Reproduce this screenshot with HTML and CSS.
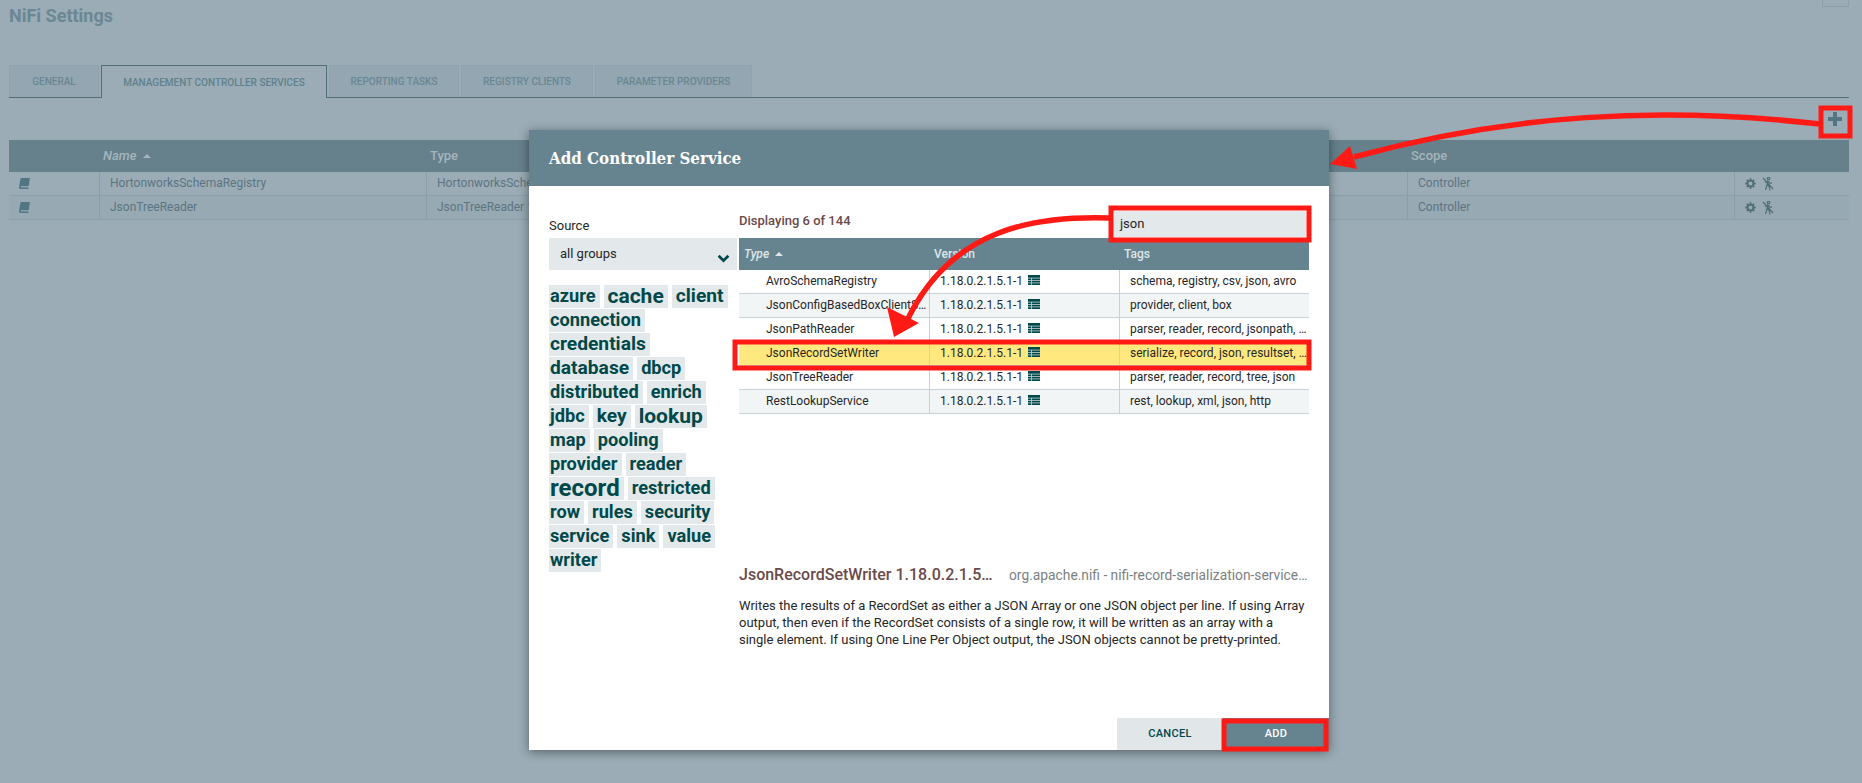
FILE: index.html
```html
<!DOCTYPE html>
<html>
<head>
    <link rel="stylesheet" href="styles.css">
</head>
<body>
    <div class="corner-box"></div>
    <h1 class="page-title">NiFi Settings</h1>

    <!-- Settings tabs -->
    <div class="tabs">
        <div class="tab tab-general">General</div>
        <div class="tab tab-active">Management Controller Services</div>
        <div class="tab tab-reporting">Reporting Tasks</div>
        <div class="tab tab-registry">Registry Clients</div>
        <div class="tab tab-parameter">Parameter Providers</div>
    </div>

    <div class="toolbar">
        <svg class="plus-icon" viewBox="0 0 14 14"><path d="M5 0h4v5h5v4H9v5H5V9H0V5h5z"/></svg>
    </div>

    <!-- Controller services table behind the dialog -->
    <div class="services">
        <div class="services-head">
            <div class="cell-icon"></div>
            <div class="cell-name"><em>Name</em> <span class="sort-up"></span></div>
            <div class="cell-type">Type</div>
            <div class="cell-scope">Scope</div>
        </div>
        <div class="services-row">
            <div class="cell-icon">
                <svg class="book-icon" viewBox="0 0 12 12"><path d="M3 0h9l-1.5 9H2.2C1.5 9 1.4 10.4 2.2 10.4h8.2l-.2 1.6H1.6C.4 12 0 11 .1 10L1.4 1.4C1.5.5 2.2 0 3 0z"/></svg>
            </div>
            <div class="cell-name">HortonworksSchemaRegistry</div>
            <div class="cell-type">HortonworksSchemaRegistry 1.18.0.2.1.5.1-1</div>
            <div class="cell-scope">Controller</div>
            <div class="cell-actions">
                <svg class="gear-icon" viewBox="0 0 12 12"><circle cx="6" cy="6" r="3.2"/><path d="M6 .3v2M6 9.7v2M.3 6h2M9.7 6h2M2 2l1.4 1.4M8.6 8.6L10 10M10 2L8.6 3.4M3.4 8.6L2 10"/></svg>
                <svg class="run-icon" viewBox="0 0 12 14"><circle cx="6.5" cy="1.6" r="1.3"/><path d="M6 3.5L5 8l-1.5 5M5.5 8l2 2 .3 3.5M5.8 4L3 5.5M6 4l2 2.2h2M1 1l10 11"/></svg>
            </div>
        </div>
        <div class="services-row row-dark">
            <div class="cell-icon">
                <svg class="book-icon" viewBox="0 0 12 12"><path d="M3 0h9l-1.5 9H2.2C1.5 9 1.4 10.4 2.2 10.4h8.2l-.2 1.6H1.6C.4 12 0 11 .1 10L1.4 1.4C1.5.5 2.2 0 3 0z"/></svg>
            </div>
            <div class="cell-name">JsonTreeReader</div>
            <div class="cell-type">JsonTreeReader 1.18.0.2.1.5.1-1</div>
            <div class="cell-scope">Controller</div>
            <div class="cell-actions">
                <svg class="gear-icon" viewBox="0 0 12 12"><circle cx="6" cy="6" r="3.2"/><path d="M6 .3v2M6 9.7v2M.3 6h2M9.7 6h2M2 2l1.4 1.4M8.6 8.6L10 10M10 2L8.6 3.4M3.4 8.6L2 10"/></svg>
                <svg class="run-icon" viewBox="0 0 12 14"><circle cx="6.5" cy="1.6" r="1.3"/><path d="M6 3.5L5 8l-1.5 5M5.5 8l2 2 .3 3.5M5.8 4L3 5.5M6 4l2 2.2h2M1 1l10 11"/></svg>
            </div>
        </div>
    </div>

    <!-- Add Controller Service dialog -->
    <div class="dialog">
        <div class="dialog-head">Add Controller Service</div>
        <div class="dialog-body">
            <div class="filter-col">
                <div class="source-label">Source</div>
                <div class="source-select">
                    <span>all groups</span>
                    <svg class="chevron" viewBox="0 0 12 8"><path d="M1.5 1.5L6 6l4.500-4.500"/></svg>
                </div>
                <div class="tag-cloud">
                    <div class="tag-row"><span class="tag">azure</span><span class="tag tag-xl">cache</span><span class="tag tag-lg">client</span></div>
                    <div class="tag-row"><span class="tag">connection</span></div>
                    <div class="tag-row"><span class="tag tag-lg">credentials</span></div>
                    <div class="tag-row"><span class="tag tag-lg">database</span><span class="tag">dbcp</span></div>
                    <div class="tag-row"><span class="tag">distributed</span><span class="tag">enrich</span></div>
                    <div class="tag-row"><span class="tag">jdbc</span><span class="tag tag-lg">key</span><span class="tag tag-xl">lookup</span></div>
                    <div class="tag-row"><span class="tag">map</span><span class="tag">pooling</span></div>
                    <div class="tag-row"><span class="tag">provider</span><span class="tag">reader</span></div>
                    <div class="tag-row"><span class="tag tag-xxl">record</span><span class="tag">restricted</span></div>
                    <div class="tag-row"><span class="tag">row</span><span class="tag">rules</span><span class="tag">security</span></div>
                    <div class="tag-row"><span class="tag">service</span><span class="tag">sink</span><span class="tag">value</span></div>
                    <div class="tag-row"><span class="tag">writer</span></div>
                </div>
            </div>
            <div class="types-col">
                <div class="types-top">
                    <div class="displaying">Displaying 6 of 144</div>
                    <div class="search-box">json</div>
                </div>
                <div class="types-table">
                    <div class="types-head">
                        <div class="col-type"><em>Type</em> <span class="sort-up"></span></div>
                        <div class="col-version">Version</div>
                        <div class="col-tags">Tags</div>
                    </div>
                    <div class="types-row">
                        <div class="col-type">AvroSchemaRegistry</div>
                        <div class="col-version">1.18.0.2.1.5.1-1 <svg class="table-icon" viewBox="0 0 12 10"><path d="M0 0h12v10H0z"/><path class="table-lines" d="M0 3.100h12M0 5.500h12M0 7.900h12M3.500 3v7"/></svg></div>
                        <div class="col-tags">schema, registry, csv, json, avro</div>
                    </div>
                    <div class="types-row row-alt">
                        <div class="col-type">JsonConfigBasedBoxClientService</div>
                        <div class="col-version">1.18.0.2.1.5.1-1 <svg class="table-icon" viewBox="0 0 12 10"><path d="M0 0h12v10H0z"/><path class="table-lines" d="M0 3.100h12M0 5.500h12M0 7.900h12M3.500 3v7"/></svg></div>
                        <div class="col-tags">provider, client, box</div>
                    </div>
                    <div class="types-row">
                        <div class="col-type">JsonPathReader</div>
                        <div class="col-version">1.18.0.2.1.5.1-1 <svg class="table-icon" viewBox="0 0 12 10"><path d="M0 0h12v10H0z"/><path class="table-lines" d="M0 3.100h12M0 5.500h12M0 7.900h12M3.500 3v7"/></svg></div>
                        <div class="col-tags">parser, reader, record, jsonpath, reader, json</div>
                    </div>
                    <div class="types-row row-selected">
                        <div class="col-type">JsonRecordSetWriter</div>
                        <div class="col-version">1.18.0.2.1.5.1-1 <svg class="table-icon" viewBox="0 0 12 10"><path d="M0 0h12v10H0z"/><path class="table-lines" d="M0 3.100h12M0 5.500h12M0 7.900h12M3.500 3v7"/></svg></div>
                        <div class="col-tags">serialize, record, json, resultset, writer, row</div>
                    </div>
                    <div class="types-row">
                        <div class="col-type">JsonTreeReader</div>
                        <div class="col-version">1.18.0.2.1.5.1-1 <svg class="table-icon" viewBox="0 0 12 10"><path d="M0 0h12v10H0z"/><path class="table-lines" d="M0 3.100h12M0 5.500h12M0 7.900h12M3.500 3v7"/></svg></div>
                        <div class="col-tags">parser, reader, record, tree, json</div>
                    </div>
                    <div class="types-row row-alt">
                        <div class="col-type">RestLookupService</div>
                        <div class="col-version">1.18.0.2.1.5.1-1 <svg class="table-icon" viewBox="0 0 12 10"><path d="M0 0h12v10H0z"/><path class="table-lines" d="M0 3.100h12M0 5.500h12M0 7.900h12M3.500 3v7"/></svg></div>
                        <div class="col-tags">rest, lookup, xml, json, http</div>
                    </div>
                </div>
                <div class="detail-head">
                    <div class="detail-name">JsonRecordSetWriter 1.18.0.2.1.5.1-1</div>
                    <div class="detail-bundle">org.apache.nifi - nifi-record-serialization-services-nar</div>
                </div>
                <p class="detail-text">Writes the results of a RecordSet as either a JSON Array or one JSON object per line. If using Array output, then even if the RecordSet consists of a single row, it will be written as an array with a single element. If using One Line Per Object output, the JSON objects cannot be pretty-printed.</p>
            </div>
        </div>
        <div class="dialog-foot">
            <div class="btn btn-cancel">Cancel</div>
            <div class="btn btn-add">Add</div>
        </div>
    </div>

    <!-- Red annotations drawn on top of the screenshot -->
    <svg class="annotations" viewBox="0 0 1862 783">
        <g class="red-box">
            <rect x="1821" y="108" width="29" height="28"/>
            <rect x="1111" y="208" width="198" height="32"/>
            <rect x="735" y="342" width="574" height="26"/>
            <rect x="1224" y="721" width="102" height="28"/>
        </g>
        <path class="arrow-line" d="M1820 124C1660 106 1510 114 1354 157"/>
        <path class="arrow-head" d="M1330 164L1350 146L1357 169z"/>
        <path class="arrow-line" d="M1109 218C1040 216 950 225 905 325"/>
        <path class="arrow-head" d="M894 337L887 307L919 323z"/>
    </svg>
</body>
</html>
```

FILE: styles.css
```css
body {
    margin: 0;
    height: 783px;
    overflow: hidden;
    position: relative;
    background-color: #9bacb6;
    font-family: Roboto, "Liberation Sans", sans-serif;
    font-size: 13px;
    color: #5b7582;
}
.corner-box {
    position: absolute;
    top: -1px;
    left: 1822px;
    width: 25px;
    height: 6px;
    border: 1px solid #8ba0ab;
}
.page-title {
    margin: 0;
    padding: 5px 0 0 9px;
    height: 65px;
    box-sizing: border-box;
    font-size: 18px;
    line-height: 22px;
    font-weight: 700;
    color: #6a8793;
}

/* Tabs */
.tabs {
    display: flex;
    gap: 2px;
    margin: 0 13px 0 9px;
    height: 33px;
    box-sizing: border-box;
    border-bottom: 1px solid #4d6f75;
}
.tab {
    display: flex;
    align-items: center;
    justify-content: center;
    height: 32px;
    box-sizing: border-box;
    border: 1px solid #8fa3ae;
    border-bottom: none;
    background-color: #93a6b1;
    font-size: 10px;
    font-weight: 500;
    text-transform: uppercase;
    color: #6a8793;
}
.tab-general { width: 90px; }
.tab-active {
    width: 226px;
    height: 33px;
    border: 1px solid #4d6f75;
    border-bottom: none;
    background-color: #9bacb6;
    color: #5f818c;
}
.tab-reporting { width: 130px; }
.tab-registry { width: 132px; }
.tab-parameter { width: 157px; }

.toolbar {
    height: 42px;
    margin-right: 13px;
    display: flex;
    justify-content: flex-end;
    align-items: center;
}
.plus-icon {
    width: 14px;
    height: 14px;
    margin-right: 7px;
    fill: #527681;
}

/* Services table */
.services {
    margin: 0 13px 0 9px;
}
.services-head, .services-row {
    display: grid;
    grid-template-columns: 90px 327px 981px 327px 115px;
}
.services-head {
    height: 32px;
    line-height: 32px;
    background-color: #66808c;
    font-size: 13px;
    font-weight: 500;
    color: #a5b5bd;
}
.services-head .cell-name, .services-head .cell-type, .services-head .cell-scope {
    padding-left: 4px;
    border: none;
}
.services-row {
    height: 24px;
    line-height: 23px;
    box-sizing: border-box;
    border-bottom: 1px solid #8a9fa9;
    font-size: 12px;
}
.row-dark {
    background-color: #97a9b3;
}
.cell-name, .cell-type, .cell-scope, .cell-actions {
    border-left: 1px solid #8a9fa9;
    padding-left: 10px;
    white-space: nowrap;
    overflow: hidden;
}
.cell-icon {
    display: flex;
    align-items: center;
    padding-left: 10px;
}
.cell-actions {
    display: flex;
    align-items: center;
    gap: 6px;
}
.book-icon {
    width: 11px;
    height: 11px;
    fill: #527681;
}
.gear-icon {
    width: 11px;
    height: 11px;
    fill: none;
    stroke: #4f6f78;
    stroke-width: 2;
}
.run-icon {
    width: 12px;
    height: 14px;
    fill: none;
    stroke: #4f6f78;
    stroke-width: 1.2;
}
.sort-up {
    display: inline-block;
    width: 0;
    height: 0;
    margin: 0 0 2px 3px;
    border-left: 4px solid transparent;
    border-right: 4px solid transparent;
    border-bottom: 4px solid #a5b5bd;
}

/* Dialog */
.dialog {
    position: absolute;
    top: 130px;
    left: 529px;
    width: 800px;
    height: 620px;
    display: flex;
    flex-direction: column;
    background-color: #ffffff;
    box-shadow: 0 2px 10px rgba(0, 0, 0, 0.45);
    color: #262626;
}
.dialog-head {
    height: 56px;
    line-height: 56px;
    padding-left: 20px;
    background-color: #668490;
    font-family: "DejaVu Serif Condensed", "DejaVu Serif", serif;
    font-stretch: condensed;
    font-size: 16.800px;
    font-weight: 700;
    color: #ffffff;
}
.dialog-body {
    flex: 1;
    display: flex;
    gap: 2px;
    padding: 33px 19px 0 20px;
    min-height: 0;
}
.filter-col {
    width: 188px;
}
.source-label {
    height: 19px;
    line-height: 14px;
    font-size: 13px;
}
.source-select {
    height: 32px;
    display: flex;
    align-items: center;
    justify-content: space-between;
    padding: 0 7px 2px 11px;
    box-sizing: border-box;
    background-color: #e3e8eb;
    font-size: 13px;
}
.chevron {
    width: 13px;
    height: 9px;
    margin-top: 10px;
    fill: none;
    stroke: #004849;
    stroke-width: 2.5;
}
.tag-cloud {
    margin-top: 15px;
}
.tag-row {
    display: flex;
    gap: 4px;
    height: 24px;
}
.tag {
    height: 23px;
    line-height: 22px;
    padding: 0 4px;
    background-color: #e3e8eb;
    font-size: 18.200px;
    font-weight: 700;
    color: #004849;
    white-space: nowrap;
}
.tag:first-child {
    padding-left: 1px;
}
.tag-lg { font-size: 19.200px; }
.tag-xl { font-size: 21px; }
.tag-xxl { font-size: 24px; }

/* Types table */
.types-col {
    width: 570px;
    display: flex;
    flex-direction: column;
}
.types-top {
    height: 35px;
    margin-top: -16px;
    display: flex;
    justify-content: space-between;
    align-items: flex-start;
}
.displaying {
    margin-top: 10px;
    font-size: 13px;
    font-weight: 500;
    color: #6b4a4a;
}
.search-box {
    width: 193px;
    height: 26px;
    line-height: 25px;
    margin: 8px 3px 0 0;
    padding-left: 7px;
    box-sizing: border-box;
    background-color: #e3e8eb;
    font-size: 13px;
}
.types-head, .types-row {
    display: grid;
    grid-template-columns: 190px 190px 190px;
}
.types-head {
    height: 32px;
    line-height: 32px;
    background-color: #668490;
    font-size: 12px;
    font-weight: 500;
    color: #dfe6e9;
}
.types-head > div {
    padding-left: 5px;
}
.types-head .sort-up {
    border-bottom-color: #dfe6e9;
}
.types-row {
    height: 24px;
    line-height: 23px;
    box-sizing: border-box;
    border-bottom: 1px solid #c7d2d7;
    font-size: 12px;
}
.types-row > div {
    white-space: nowrap;
    overflow: hidden;
    text-overflow: ellipsis;
}
.types-row .col-type {
    padding: 0 2px 0 27px;
}
.types-row .col-version, .types-row .col-tags {
    border-left: 1px solid #c7d2d7;
    padding: 0 2px 0 10px;
}
.row-alt {
    background-color: #f2f5f6;
}
.row-selected {
    background-color: #ffe97f;
}
.table-icon {
    width: 12px;
    height: 10px;
    margin-left: 2px;
    fill: #004849;
}
.table-lines {
    stroke: #c4d4d4;
    stroke-width: 0.8;
    fill: none;
}

/* Details */
.detail-head {
    display: flex;
    gap: 12px;
    margin-top: 151px;
    height: 20px;
    line-height: 20px;
}
.detail-name {
    width: 258px;
    flex: none;
    font-size: 16px;
    font-weight: 500;
    color: #6b4a4a;
    white-space: nowrap;
    overflow: hidden;
    text-overflow: ellipsis;
}
.detail-bundle {
    flex: 1;
    font-size: 13.800px;
    color: #7b7f82;
    white-space: nowrap;
    overflow: hidden;
    text-overflow: ellipsis;
}
.detail-text {
    margin: 12px 0 0;
    font-size: 13px;
    line-height: 17px;
}
.dialog-foot {
    display: flex;
    justify-content: flex-end;
    height: 32px;
}
.btn {
    height: 32px;
    line-height: 32px;
    text-align: center;
    font-size: 11px;
    font-weight: 500;
    letter-spacing: 0.3px;
    text-transform: uppercase;
}
.btn-cancel {
    width: 106px;
    background-color: #e1e6e9;
    color: #004849;
}
.btn-add {
    width: 106px;
    background-color: #668490;
    color: #ffffff;
}

/* Annotations */
.annotations {
    position: absolute;
    top: 0;
    left: 0;
    width: 1862px;
    height: 783px;
}
.red-box rect {
    fill: none;
    stroke: #ff1a16;
    stroke-width: 5;
}
.arrow-line {
    fill: none;
    stroke: #ff1a16;
    stroke-width: 5.5;
}
.arrow-head {
    fill: #ff1a16;
}
```
